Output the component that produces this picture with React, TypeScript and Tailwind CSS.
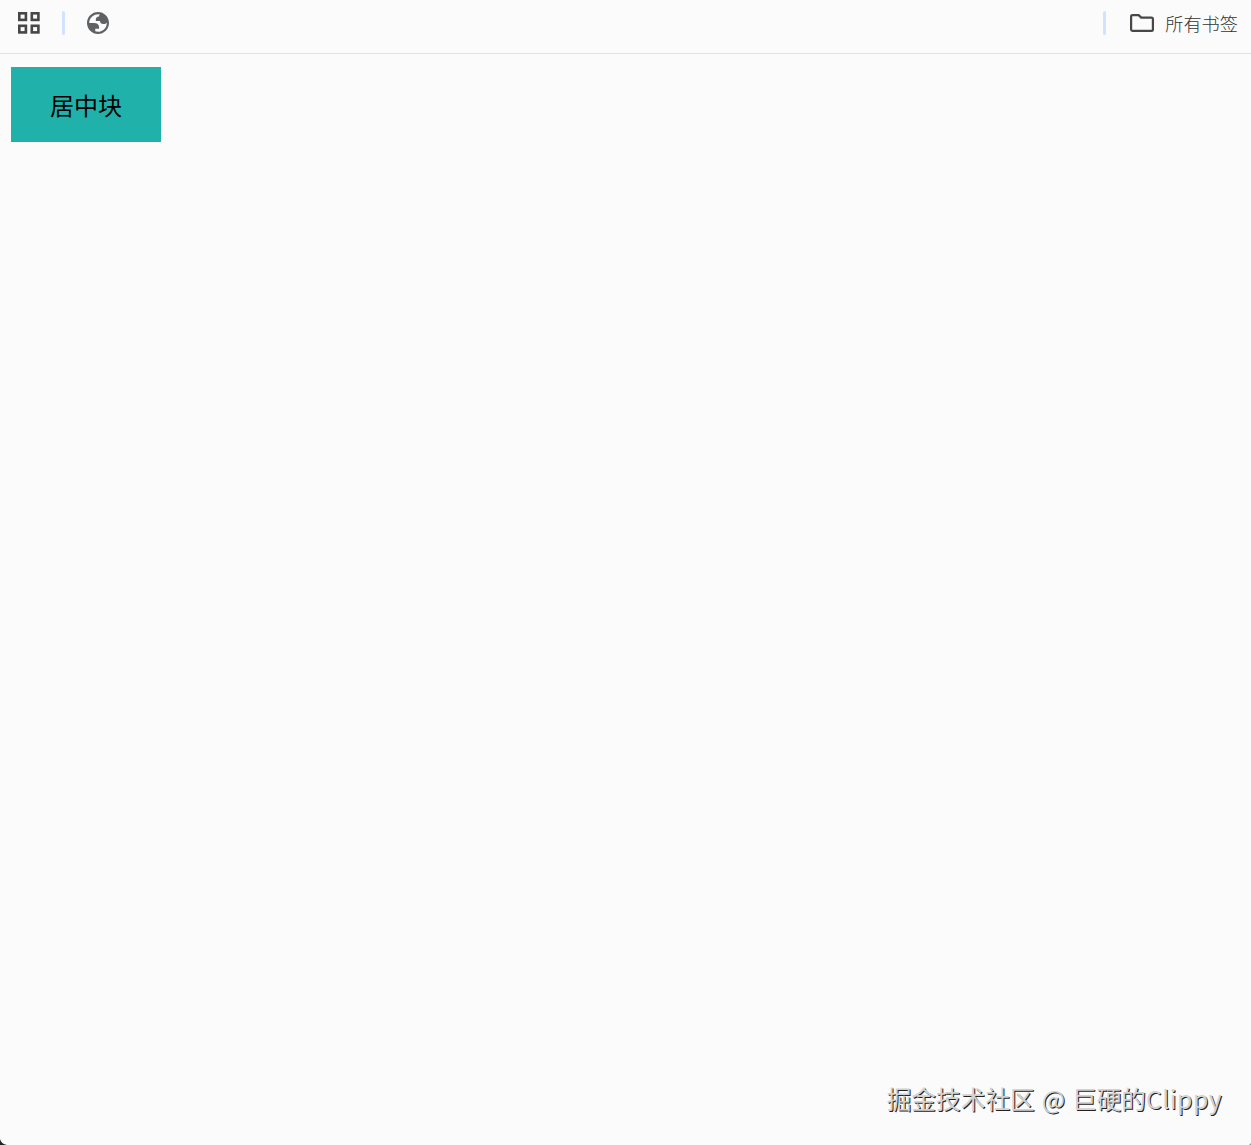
import React from 'react';

const Divider = () => <div className="h-6 w-[3px] rounded-full bg-[#d3e3fd]" />;

const AppsIcon = () => (
  <svg width="22" height="22" viewBox="0 0 22 22" fill="none" stroke="#474747" strokeWidth="2.6">
    <rect x="1.3" y="1.3" width="6.6" height="6.6" />
    <rect x="13.8" y="1.3" width="6.6" height="6.6" />
    <rect x="1.3" y="13.8" width="6.6" height="6.6" />
    <rect x="13.8" y="13.8" width="6.6" height="6.6" />
  </svg>
);

const GlobeIcon = () => (
  <svg width="22" height="22" viewBox="2 2 20 20" fill="#5f6163" fillRule="evenodd">
    <path d="M12 2C6.48 2 2 6.48 2 12s4.48 10 10 10 10-4.48 10-10S17.52 2 12 2zM4 12h4.4c3.407.022 4.922 1.73 4.543 5.127H9.488v2.47a8.004 8.004 0 0 0 10.498-8.083C19.327 12.504 18.332 13 17 13c-2.137 0-3.206-.916-3.206-2.75h-3.748c-.274-2.728.683-4.092 2.87-4.092 0-.975.327-1.597.811-1.97A8.004 8.004 0 0 0 4 12z" />
  </svg>
);

const FolderIcon = () => (
  <svg width="24" height="18" viewBox="0 0 24 18" fill="none" stroke="#474747" strokeWidth="2.2">
    <path d="M2.5 1.1h6.2l2.5 2.5h10.3a1.4 1.4 0 0 1 1.4 1.4v10.5a1.4 1.4 0 0 1-1.4 1.4h-19a1.4 1.4 0 0 1-1.4-1.4v-13a1.4 1.4 0 0 1 1.4-1.4z" />
  </svg>
);

export default function App() {
  return (
    <div className="relative flex h-[1145px] w-[1251px] flex-col overflow-hidden bg-[#fbfbfb] font-['Noto_Sans_CJK_SC',sans-serif]">
      {/* Bookmarks bar */}
      <header className="flex h-[54px] shrink-0 items-start justify-between border-b border-[#e1e3e1] pt-[11px] pr-[13px] pl-[18px]">
        <div className="flex h-6 items-center">
          <AppsIcon />
          <div className="ml-[22px]">
            <Divider />
          </div>
          <div className="ml-[22px]">
            <GlobeIcon />
          </div>
        </div>
        <div className="flex h-6 items-center">
          <Divider />
          <div className="ml-6">
            <FolderIcon />
          </div>
          <span className="ml-[11px] text-[18.2px] leading-6 font-light whitespace-nowrap text-[#333]">所有书签</span>
        </div>
      </header>

      <main className="grow pt-[13px] pl-[11px]">
        <div className="flex h-[75px] w-[150px] items-center justify-center bg-[#20b2aa] text-2xl text-black">
          居中块
        </div>
      </main>

      <footer className="flex justify-end pr-[29px] pb-[29px]">
        <span className="text-[24.7px] leading-[36px] whitespace-nowrap text-[#d2d2d2] [text-shadow:1px_1px_0_#222] [word-spacing:1.4px]">
          掘金技术社区 @ 巨硬的<span className="tracking-[0.5px]">Clippy</span>
        </span>
      </footer>

      {/* Rounded window corners */}
      <svg className="absolute bottom-0 left-0" width="8" height="8" viewBox="0 0 8 8" fill="#222">
        <path d="M0 2Q1 7 7 8H0z" />
      </svg>
      <svg className="absolute right-0 bottom-0" width="2" height="2" viewBox="0 0 2 2" fill="#999">
        <path d="M2 0v2H0z" />
      </svg>
    </div>
  );
}
